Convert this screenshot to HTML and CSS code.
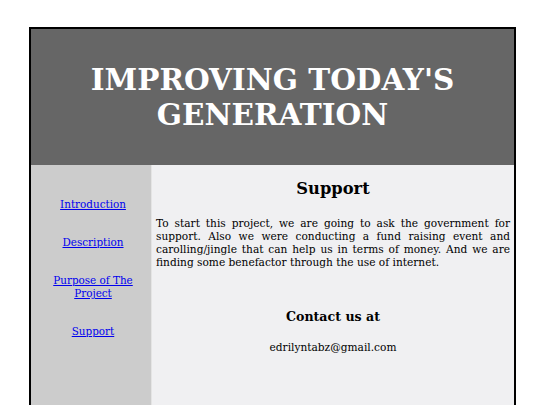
FILE: index.html
```html
<!DOCTYPE html>
<html>
<head>
<meta charset="utf-8">
<title>Improving Today's Generation</title>
<link rel="stylesheet" href="styles.css">
</head>
<body>
<div class="page">
  <header class="banner">
    <h1>IMPROVING TODAY'S<br>GENERATION</h1>
  </header>
  <div class="main">
    <nav class="sidebar">
      <a href="#">Introduction</a>
      <a href="#">Description</a>
      <a href="#">Purpose of The<br>Project</a>
      <a href="#">Support</a>
    </nav>
    <section class="content">
      <h2>Support</h2>
      <p class="body-text">To start this project, we are going to ask the government for support. Also we were conducting a fund raising event and carolling/jingle that can help us in terms of money. And we are finding some benefactor through the use of internet.</p>
      <h3>Contact us at</h3>
      <p class="email">edrilyntabz@gmail.com</p>
    </section>
  </div>
</div>
</body>
</html>
```

FILE: styles.css
```css
html, body {
  margin: 0;
  padding: 0;
  background: #ffffff;
}
body {
  font-family: "DejaVu Serif", serif;
  font-size: 10.6px;
  color: #000;
}
.page {
  margin: 27px 0 0 29px;
  width: 483px;
  border: 2px solid #000;
  border-bottom: none;
}
.banner {
  background: #666666;
  height: 136px;
  display: flex;
  align-items: center;
  justify-content: center;
}
.banner h1 {
  margin: 0;
  color: #fff;
  font-size: 29.5px;
  line-height: 35px;
  text-align: center;
  font-weight: bold;
}
.main {
  display: flex;
  height: 240px;
}
.sidebar {
  width: 121px;
  background: #cccccc;
  border-right: 1px solid #e4e4e4;
  display: flex;
  flex-direction: column;
  align-items: center;
  gap: 25px;
  padding: 33px 0 0 4px;
  box-sizing: border-box;
}
.sidebar a {
  color: #0000ee;
  text-decoration: underline;
  text-align: center;
  font-size: 10.4px;
  line-height: 13px;
}
.content {
  flex: 1;
  background: #f0f0f2;
  padding: 14px 4px 0 4px;
}
.content h2 {
  margin: 0 0 19px;
  font-size: 16.3px;
  line-height: 19px;
  text-align: center;
}
.body-text {
  margin: 0 0 40px;
  line-height: 13px;
  text-align: justify;
}
.content h3 {
  margin: 0 0 17px;
  font-size: 12.6px;
  line-height: 15px;
  text-align: center;
}
.email {
  margin: 0;
  line-height: 13px;
  text-align: center;
}
```
